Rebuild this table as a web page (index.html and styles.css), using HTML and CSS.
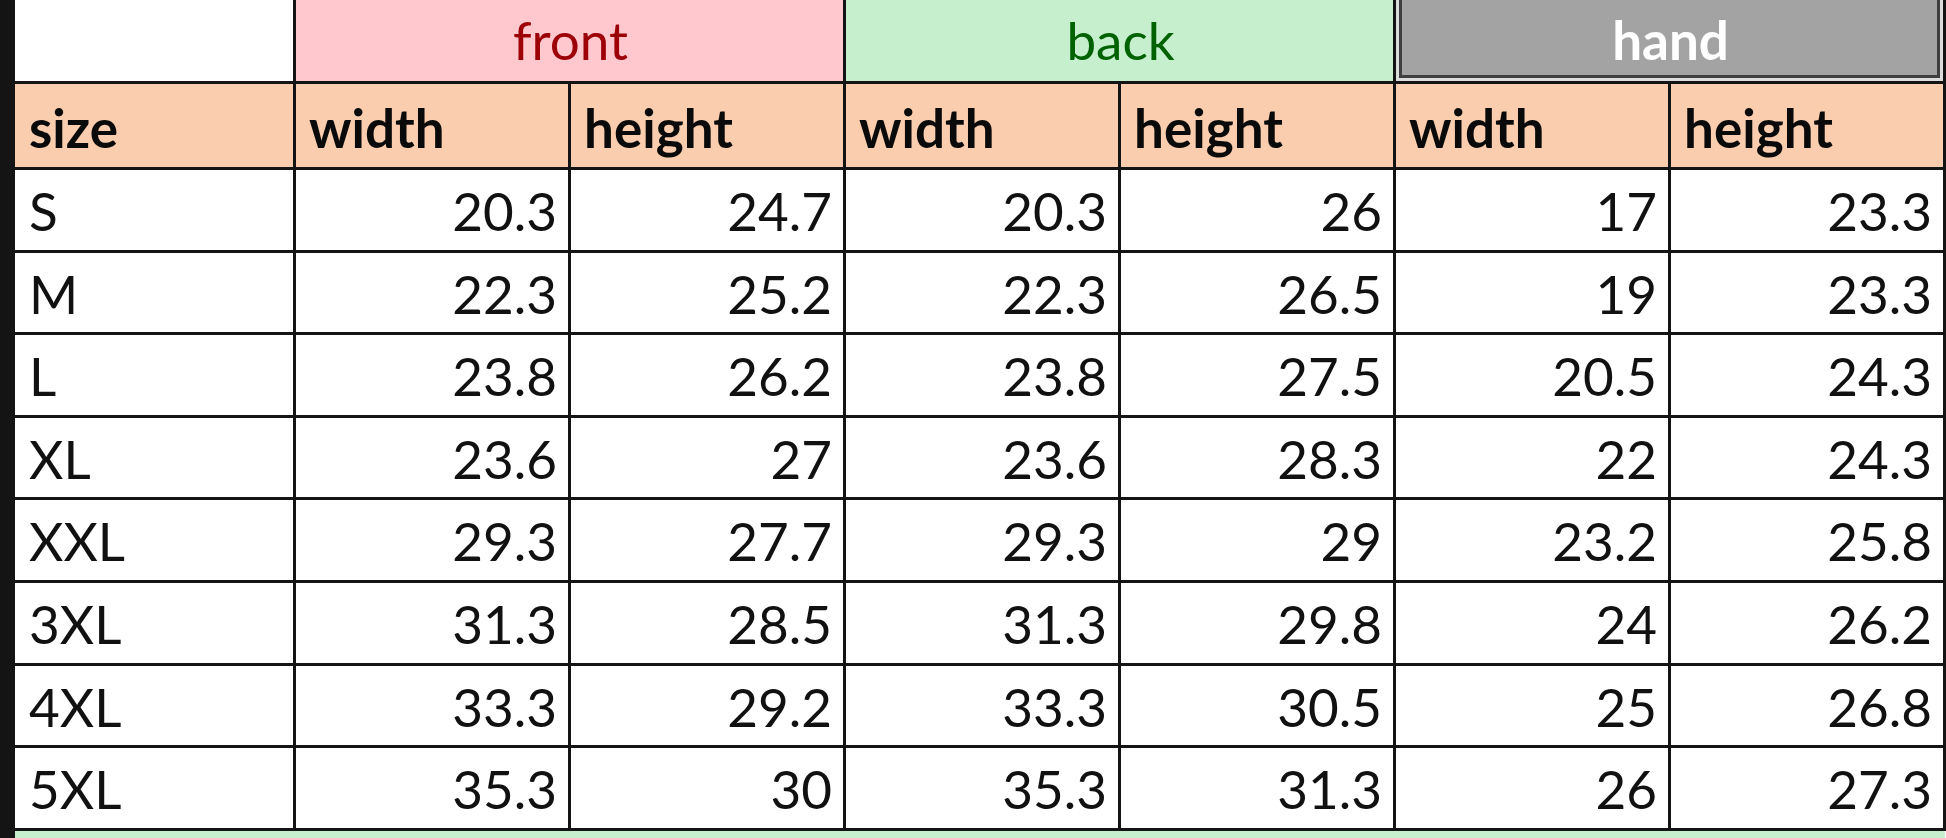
FILE: index.html
```html
<!DOCTYPE html>
<html lang="en">
<head>
<meta charset="utf-8">
<title>Size chart</title>
<link rel="stylesheet" href="styles.css">
</head>
<body>
<div class="sheet">
  <table class="grid">
    <colgroup>
      <col class="c-size">
      <col class="c-val"><col class="c-val">
      <col class="c-val"><col class="c-val">
      <col class="c-val"><col class="c-val">
    </colgroup>
    <tbody>
      <tr class="r-group">
        <td class="blank"></td>
        <td class="bad" colspan="2">front</td>
        <td class="good" colspan="2">back</td>
        <td class="check" colspan="2">hand</td>
      </tr>
      <tr class="r-head">
        <td class="lbl">size</td>
        <td class="lbl">width</td><td class="lbl">height</td>
        <td class="lbl">width</td><td class="lbl">height</td>
        <td class="lbl">width</td><td class="lbl">height</td>
      </tr>
      <tr class="r-data"><td class="sz">S</td><td class="num">20.3</td><td class="num">24.7</td><td class="num">20.3</td><td class="num">26</td><td class="num">17</td><td class="num">23.3</td></tr>
      <tr class="r-data"><td class="sz">M</td><td class="num">22.3</td><td class="num">25.2</td><td class="num">22.3</td><td class="num">26.5</td><td class="num">19</td><td class="num">23.3</td></tr>
      <tr class="r-data"><td class="sz">L</td><td class="num">23.8</td><td class="num">26.2</td><td class="num">23.8</td><td class="num">27.5</td><td class="num">20.5</td><td class="num">24.3</td></tr>
      <tr class="r-data"><td class="sz">XL</td><td class="num">23.6</td><td class="num">27</td><td class="num">23.6</td><td class="num">28.3</td><td class="num">22</td><td class="num">24.3</td></tr>
      <tr class="r-data"><td class="sz">XXL</td><td class="num">29.3</td><td class="num">27.7</td><td class="num">29.3</td><td class="num">29</td><td class="num">23.2</td><td class="num">25.8</td></tr>
      <tr class="r-data"><td class="sz">3XL</td><td class="num">31.3</td><td class="num">28.5</td><td class="num">31.3</td><td class="num">29.8</td><td class="num">24</td><td class="num">26.2</td></tr>
      <tr class="r-data"><td class="sz">4XL</td><td class="num">33.3</td><td class="num">29.2</td><td class="num">33.3</td><td class="num">30.5</td><td class="num">25</td><td class="num">26.8</td></tr>
      <tr class="r-data"><td class="sz">5XL</td><td class="num">35.3</td><td class="num">30</td><td class="num">35.3</td><td class="num">31.3</td><td class="num">26</td><td class="num">27.3</td></tr>
      <tr class="r-next">
        <td></td><td></td><td></td><td></td><td></td><td></td><td></td>
      </tr>
    </tbody>
  </table>
</div>
</body>
</html>
```
FILE: styles.css
```css
html, body {
  margin: 0;
  padding: 0;
}

body {
  background: #141414;
  width: 1946px;
  height: 838px;
  overflow: hidden;
}

.sheet {
  margin-left: 15px;
  height: 838px;
  overflow: hidden;
  background: #ffffff;
}

.grid {
  border-collapse: collapse;
  table-layout: fixed;
  width: 1929.5px;
  font-family: "Lato", "Open Sans", sans-serif;
  font-size: 53px;
  line-height: 1.2;
  color: #111111;
}

.c-size { width: 279.5px; }
.c-val { width: 275px; }

.grid td {
  border: 3px solid #141414;
  padding: 0 11px 7px 13px;
  vertical-align: bottom;
  white-space: nowrap;
  overflow: hidden;
}

.grid td:first-child {
  border-left: none;
  padding-left: 14px;
}

.r-group td {
  border-top: none;
  height: 72px;
  text-align: center;
  padding-bottom: 9px;
}

.r-group .blank {
  background: #ffffff;
}

.r-group .bad {
  background: #ffc7ce;
  color: #9c0006;
}

.r-group .good {
  background: #c6efce;
  color: #006100;
}

.r-group .check {
  background: #a3a3a3;
  color: #ffffff;
  font-weight: 700;
  box-shadow:
    inset 3px 0 0 #dcdcdc,
    inset -3px 0 0 #dcdcdc,
    inset 0 -3px 0 #dcdcdc,
    inset 6px 0 0 #3f3f3f,
    inset -6px 0 0 #3f3f3f,
    inset 0 -6px 0 #3f3f3f;
}

.r-head td {
  height: 76px;
  background: #f9cdae;
  font-weight: 700;
  color: #0a0a0a;
}

.r-data td {
  height: 72.6px;
  background: #ffffff;
}

.r-data .num {
  text-align: right;
}

.r-data .sz {
  text-align: left;
}

.r-next td {
  height: 40px;
  background: #c6efce;
  border-left: none;
  border-right: none;
  border-bottom: none;
}
```
